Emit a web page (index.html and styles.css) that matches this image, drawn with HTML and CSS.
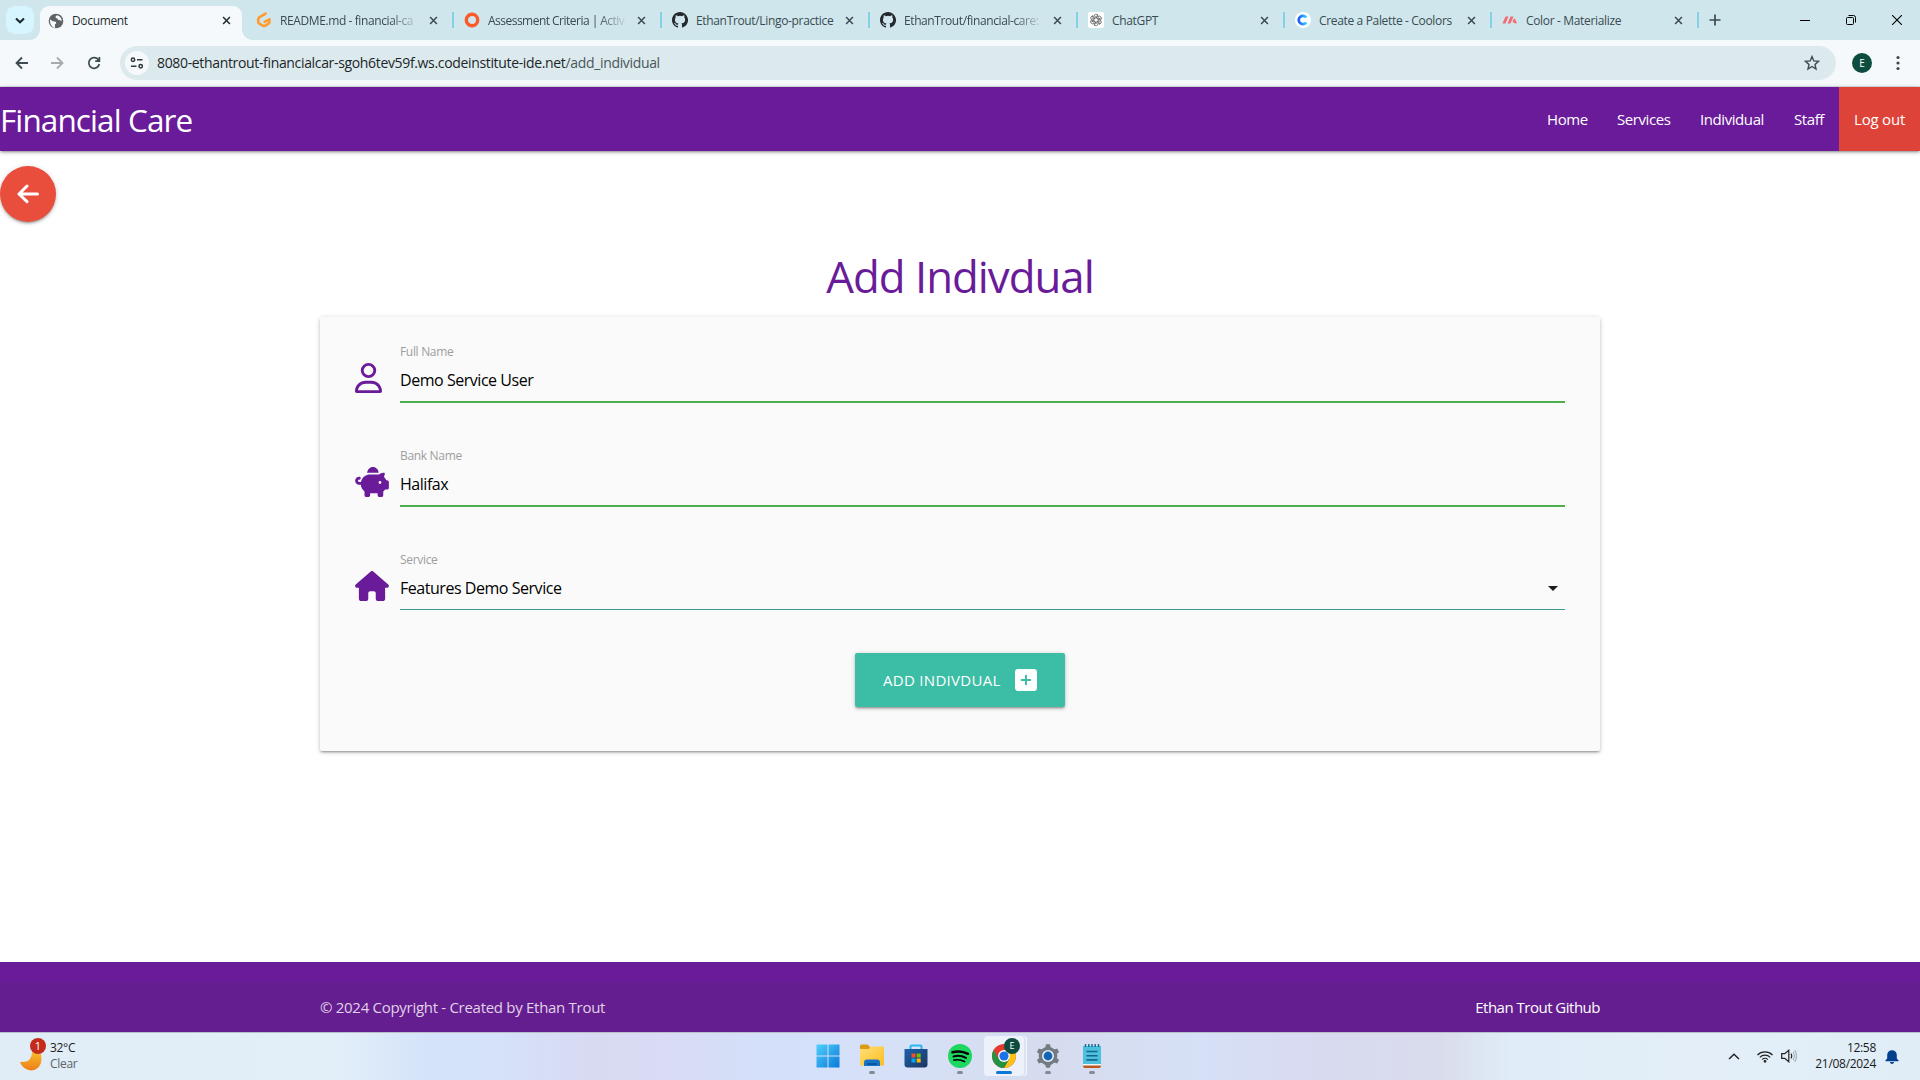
FILE: index.html
```html
<!DOCTYPE html>
<html lang="en">
<head>
<meta charset="utf-8">
<title>Document</title>
<link rel="stylesheet" href="styles.css">
</head>
<body>
<svg width="0" height="0" class="defs" aria-hidden="true">
  <defs>
    <symbol id="x" viewBox="0 0 10 10"><path d="M1.2 1.2l7.6 7.6M8.800 1.200l-7.600 7.600" stroke="currentColor" stroke-width="1.7" fill="none"/></symbol>
    <symbol id="github" viewBox="0 0 16 16"><path fill="#24292f" d="M8 0C3.580 0 0 3.580 0 8c0 3.540 2.290 6.530 5.470 7.590.4.070.55-.17.55-.38 0-.19-.01-.82-.01-1.490-2.010.37-2.530-.49-2.690-.94-.09-.23-.48-.94-.82-1.130-.28-.15-.68-.52-.01-.53.63-.01 1.080.58 1.230.82.72 1.210 1.870.87 2.330.66.07-.52.28-.87.51-1.070-1.780-.2-3.640-.89-3.640-3.950 0-.87.31-1.590.82-2.150-.08-.2-.36-1.020.08-2.120 0 0 .67-.21 2.200.82a7.600 7.600 0 0 1 4 0c1.530-1.040 2.200-.82 2.200-.82.44 1.100.16 1.920.08 2.120.51.56.82 1.270.82 2.150 0 3.070-1.870 3.750-3.650 3.950.29.25.54.73.54 1.480 0 1.070-.01 1.930-.01 2.200 0 .21.15.46.55.38A8 8 0 0 0 8 0z"/></symbol>
  </defs>
</svg>

<header class="tabs">
  <button class="tab-search"><svg width="10" height="7" viewBox="0 0 10 7"><path d="M1 1.500l4 3.800 4-3.800" fill="none" stroke="#18282c" stroke-width="2"/></svg></button>
  <div class="tab active">
    <svg class="fav" viewBox="0 0 16 16"><circle cx="8" cy="8" r="7.300" fill="#5f6368"/><path d="M2 6.200q2.500 2.600 4.800 2.300 1.700.1 1.400 1.900-1.700.4-1.300 2.700l.2 1.800Q2.500 14 2 8.500zM9.200 2.200q-1.700.6-1.700 2 .3 1.300 1.800 1 .1 1.700 1.600 1.900 1.400-.1 2.700 1.300Q14.200 4 9.200 2.200z" fill="#f5f9fc"/></svg>
    <span class="title">Document</span><svg class="close"><use href="#x"/></svg>
  </div>
  <div class="tab wide">
    <svg class="fav" viewBox="0 0 16 16"><path d="M9.500 1.700L3.600 5.100Q2.200 6 2.200 7.500v2.200q0 1.300 1.200 2l3.400 2q1.200.7 2.400 0l3-1.800q1.200-.7 1.200-2V7.300L8.700 9.800" fill="none" stroke="#ff9a2e" stroke-width="2.600" stroke-linecap="round" stroke-linejoin="round"/></svg>
    <span class="title fade">README.md - financial-ca</span><svg class="close"><use href="#x"/></svg>
  </div>
  <div class="tab wide sep">
    <svg class="fav" viewBox="0 0 16 16"><circle cx="8" cy="8" r="5.700" fill="none" stroke="#fa5a28" stroke-width="3.400"/></svg>
    <span class="title fade tight">Assessment Criteria | Activ</span><svg class="close"><use href="#x"/></svg>
  </div>
  <div class="tab wide sep"><svg class="fav"><use href="#github"/></svg><span class="title">EthanTrout/Lingo-practice</span><svg class="close"><use href="#x"/></svg></div>
  <div class="tab wide sep"><svg class="fav"><use href="#github"/></svg><span class="title fade">EthanTrout/financial-care:</span><svg class="close"><use href="#x"/></svg></div>
  <div class="tab sep">
    <svg class="fav" viewBox="0 0 16 16"><rect width="16" height="16" rx="2" fill="#fff"/><g fill="none" stroke="#333" stroke-width=".65"><g id="petal"><path d="M6 9V4.400a2.200 2.200 0 0 1 4.100-1.100L6.700 5.300"/></g><use href="#petal" transform="rotate(60 8 8)"/><use href="#petal" transform="rotate(120 8 8)"/><use href="#petal" transform="rotate(180 8 8)"/><use href="#petal" transform="rotate(240 8 8)"/><use href="#petal" transform="rotate(300 8 8)"/></g></svg>
    <span class="title">ChatGPT</span><svg class="close"><use href="#x"/></svg>
  </div>
  <div class="tab sep">
    <svg class="fav" viewBox="0 0 16 16"><defs><linearGradient id="cool"><stop offset="0" stop-color="#1d5cff"/><stop offset="1" stop-color="#2fd0ff"/></linearGradient></defs><circle cx="8" cy="8" r="8" fill="#fff"/><path d="M11.300 5.500a4.200 4.200 0 1 0 0 5" fill="none" stroke="url(#cool)" stroke-width="2.700"/></svg>
    <span class="title">Create a Palette - Coolors</span><svg class="close"><use href="#x"/></svg>
  </div>
  <div class="tab sep">
    <svg class="fav" viewBox="0 0 16 16"><path d="M.5 11.500L3.500 4.500h3L3.500 11.500zM5.500 11.500L8.500 4.500h3l-3 7zM10.500 9.500l1.500-3q1.500 0 1.500 1.500 0 1.500 1.500 2.200l-.8 1.400q-2.400.1-3.700-2.100z" fill="#ee6e73"/></svg>
    <span class="title">Color - Materialize</span><svg class="close"><use href="#x"/></svg>
  </div>
  <div class="new-tab sep"><svg width="12" height="12" viewBox="0 0 12 12"><path d="M6 .5v11M.5 6h11" stroke="#3c4a4e" stroke-width="1.700"/></svg></div>
  <div class="window-controls">
    <svg width="10" height="10"><path d="M0 5.500h10" stroke="#000"/></svg>
    <svg width="10" height="10" viewBox="0 0 10 10" fill="none" stroke="#000"><rect x=".5" y="2.500" width="7" height="7" rx="1"/><path d="M2.500.5h5a2 2 0 0 1 2 2v5"/></svg>
    <svg width="10" height="10" viewBox="0 0 10 10"><path d="M0 0l10 10M10 0L0 10" stroke="#000" stroke-width="1.100"/></svg>
  </div>
</header>

<div class="toolbar">
  <svg class="back" width="14" height="14" viewBox="0 0 14 14"><path d="M13 7H1.800M7 1.500L1.500 7 7 12.500" fill="none" stroke="#3b4b50" stroke-width="1.800"/></svg>
  <svg class="forward" width="14" height="14" viewBox="0 0 14 14"><path d="M1 7h11.200M7 1.500L12.500 7 7 12.500" fill="none" stroke="#a5abae" stroke-width="1.800"/></svg>
  <svg class="reload" width="14" height="14" viewBox="0 0 14 14"><path d="M11.600 4.200A5.300 5.300 0 1 0 12.300 8M12.400 1v4.200H8.200" fill="none" stroke="#3b4b50" stroke-width="1.700"/></svg>
  <div class="omnibox">
    <span class="tune"><svg width="14" height="12" viewBox="0 0 14 12" fill="none" stroke="#2e3a3e" stroke-width="1.500"><circle cx="3" cy="2.700" r="1.700"/><path d="M7 2.700h5.500M1 9.200h5.500"/><circle cx="10.700" cy="9.200" r="1.700"/></svg></span>
    <span class="url">8080-ethantrout-financialcar-sgoh6tev59f.ws.codeinstitute-ide.net<span class="path">/add_individual</span></span>
    <svg class="star" width="16" height="16" viewBox="0 0 16 16"><path d="M8 1.600l1.800 4.300 4.700.4-3.500 3.100 1 4.600L8 11.500 4 14l1-4.600L1.500 6.300l4.700-.4z" fill="none" stroke="#3d4b50" stroke-width="1.400"/></svg>
  </div>
  <span class="avatar">E</span>
  <svg class="menu" width="4" height="16" viewBox="0 0 4 16" fill="#3b4b50"><circle cx="2" cy="2.500" r="1.600"/><circle cx="2" cy="8" r="1.600"/><circle cx="2" cy="13.500" r="1.600"/></svg>
</div>

<main class="page">
  <nav class="navbar">
    <a class="brand">Financial Care</a>
    <a class="link home">Home</a><a class="link services">Services</a><a class="link individual">Individual</a><a class="link staff">Staff</a><a class="link logout">Log out</a>
  </nav>
  <a class="back-btn"><svg width="22" height="20" viewBox="0 0 22 20"><path d="M20.500 10H2M10 2L2 10l8 7.700" fill="none" stroke="#fff" stroke-width="3" stroke-linecap="round" stroke-linejoin="round"/></svg></a>
  <h3 class="heading"><span>Add Indivdual</span></h3>
  <form class="card">
    <div class="field valid">
      <svg width="27" height="30" viewBox="0 0 448 512" preserveAspectRatio="none" fill="#6a1b9a"><path d="M304 128a80 80 0 1 0-160 0 80 80 0 1 0 160 0zM96 128a128 128 0 1 1 256 0 128 128 0 1 1-256 0zM49.300 464H398.700C389.800 400.900 335.600 352 269.700 352H178.300c-65.900 0-120.100 48.900-129 112zM0 482.300C0 383.800 79.800 304 178.300 304h91.400C368.200 304 448 383.800 448 482.300c0 16.400-13.300 29.700-29.700 29.700H29.700C13.300 512 0 498.700 0 482.300z"/></svg>
      <div class="control"><label>Full Name</label><span class="value">Demo Service User</span></div>
    </div>
    <div class="field valid">
      <svg width="34" height="30" viewBox="0 0 576 512" fill="#6a1b9a"><path d="M400 96l0 .7c-5.300-.4-10.600-.7-16-.7H256c-16.500 0-32.500 2.100-47.800 6-.1-2-.2-4-.2-6 0-53 43-96 96-96s96 43 96 96zm-16 32c3.500 0 7 .1 10.400.3 4.200.3 8.400.7 12.600 1.300C424.600 109.100 450.800 96 480 96h11.500c10.400 0 18 9.800 15.500 19.900l-13.800 55.200c15.800 14.800 28.700 32.800 37.500 52.900H544c17.700 0 32 14.300 32 32v96c0 17.700-14.300 32-32 32H512c-9.100 12.100-19.900 22.900-32 32v64c0 17.700-14.300 32-32 32H416c-17.700 0-32-14.300-32-32V448H256v32c0 17.700-14.300 32-32 32H192c-17.700 0-32-14.300-32-32V416c-34.900-26.200-58.700-66.300-63.200-112H68c-37.600 0-68-30.400-68-68s30.400-68 68-68h4c13.300 0 24 10.700 24 24s-10.700 24-24 24H68c-11 0-20 9-20 20s9 20 20 20H99.200c12.100-59.800 57.700-107.500 116.300-122.800 12.900-3.400 26.500-5.200 40.500-5.200H384zm64 136a24 24 0 1 0-48 0 24 24 0 1 0 48 0z"/></svg>
      <div class="control"><label>Bank Name</label><span class="value">Halifax</span></div>
    </div>
    <div class="field select">
      <svg width="34" height="30" viewBox="0 0 576 512" fill="#6a1b9a"><path d="M575.800 255.500c0 18-15 32.100-32 32.100h-32l.7 160.200V472c0 22.100-17.900 40-40 40H392c-22.100 0-40-17.900-40-40V376c0-17.700-14.300-32-32-32H256c-17.700 0-32 14.300-32 32v96c0 22.100-17.900 40-40 40H104c-22.100 0-40-17.900-40-40V287.600H32c-18 0-32-14-32-32.100 0-9 3-17 10-24L266.400 8c7-7 15-8 22-8s15 2 21 7L564.800 231.500c8 7 12 15 11 24z"/></svg>
      <div class="control"><label>Service</label><span class="value">Features Demo Service</span><svg class="caret" width="10" height="5" viewBox="0 0 10 5"><path d="M0 0h10L5 5z" fill="#1c1c1c"/></svg></div>
    </div>
    <button type="button" class="submit"><span>ADD INDIVDUAL</span><svg width="22" height="22" viewBox="0 0 22 22"><rect width="22" height="22" rx="3.200" fill="#fff"/><path d="M11 6.700v8.600M6.700 11h8.600" stroke="#3cbda5" stroke-width="2" stroke-linecap="round"/></svg></button>
  </form>
  <footer class="footer"><div class="copyright"><span class="copy-text">© 2024 Copyright - Created by Ethan Trout</span><a class="credit">Ethan Trout Github</a></div></footer>
</main>

<div class="taskbar">
  <div class="weather">
    <div class="moon"><svg width="26" height="34" viewBox="0 0 26 34"><defs><linearGradient id="moon" x2="0" y2="1"><stop offset="0" stop-color="#f7bd2d"/><stop offset="1" stop-color="#ef7d16"/></linearGradient></defs><path d="M0 25q12 1 12-10l9 2q2 10-4 14.500Q12 35 6 32 1.500 29.500 0 25z" fill="url(#moon)"/><circle cx="18" cy="9" r="8" fill="#c42b1c"/></svg><b>1</b></div>
    <div class="weather-text"><span>32°C</span><span class="muted">Clear</span></div>
  </div>
  <div class="apps">
    <div class="app"><svg viewBox="0 0 24 24"><defs><linearGradient id="win" x2="1" y2="1"><stop offset="0" stop-color="#4fd0fc"/><stop offset="1" stop-color="#0a78d8"/></linearGradient></defs><path d="M.5.500h11v11H.5zM12.500.500h11v11h-11zM.5 12.500h11v11H.5zM12.500 12.500h11v11h-11z" fill="url(#win)"/></svg></div>
    <div class="app run"><svg viewBox="0 0 24 24"><defs><linearGradient id="fold" x2="1" y2="1"><stop offset="0" stop-color="#ffdf77"/><stop offset="1" stop-color="#fcbd23"/></linearGradient></defs><path d="M0 2q0-1.500 1.500-1.500h6L10 3v4H0z" fill="#dd9a11"/><path d="M0 5h8.500L11 2.500h13v19H0z" fill="url(#fold)"/><path d="M4 22v-3.500Q4 15.500 7 15.500h10q3 0 3 3V22z" fill="#1672c6"/><path d="M7 19h10v2H7z" fill="#0b569c"/></svg></div>
    <div class="app"><svg viewBox="0 0 24 24"><defs><linearGradient id="store" x2="1" y2="1"><stop offset="0" stop-color="#1b62ad"/><stop offset="1" stop-color="#1d3660"/></linearGradient></defs><path d="M6.500 6V2.500q0-1 1-1h9q1 0 1 1V6" fill="none" stroke="#28b8ef" stroke-width="2"/><path d="M.5 5h23v15.500q0 3-3 3h-17q-3 0-3-3z" fill="url(#store)"/><path d="M7.500 9.500h4v4h-4z" fill="#f25022"/><path d="M12.700 9.500h4v4h-4z" fill="#7fba00"/><path d="M7.500 14.500h4v4h-4z" fill="#00a4ef"/><path d="M12.700 14.500h4v4h-4z" fill="#ffb900"/></svg></div>
    <div class="app run"><svg viewBox="0 0 24 24"><circle cx="12" cy="12" r="12" fill="#1ed760"/><path d="M4.500 8.300q8-2.300 15.500 1.500" stroke="#000" stroke-width="2.500" fill="none" stroke-linecap="round"/><path d="M5.500 12.500q6.500-1.800 12.500 1.400" stroke="#000" stroke-width="2" fill="none" stroke-linecap="round"/><path d="M6 16.200q5.500-1.300 10.500 1.300" stroke="#000" stroke-width="1.700" fill="none" stroke-linecap="round"/></svg></div>
    <div class="app current"><svg viewBox="0 0 24 24"><circle cx="12" cy="12" r="12" fill="#e33b2e"/><path d="M22.390 6A12 12 0 0 1 12 24L17.200 15 12 6z" fill="#fbc116"/><path d="M1.610 6A12 12 0 0 0 12 24l5.200-9H6.800z" fill="#229342"/><circle cx="12" cy="12" r="5.900" fill="#fff"/><circle cx="12" cy="12" r="4.600" fill="#1a73e8"/></svg><span class="profile">E</span></div>
    <div class="app run"><svg viewBox="0 0 24 24"><g fill="#737b82"><circle cx="12" cy="12" r="9.300"/><g id="teeth"><path d="M9.300 4L10 .3h4l.7 3.700zM9.300 20l.7 3.700h4l.7-3.700z"/></g><use href="#teeth" transform="rotate(60 12 12)"/><use href="#teeth" transform="rotate(120 12 12)"/></g><circle cx="12" cy="12" r="6" fill="#e7edf5"/><circle cx="12" cy="12" r="4.400" fill="#1265b5"/></svg></div>
    <div class="app run"><svg viewBox="0 0 24 24"><path d="M3 20h18v2q0 2-2 2H5q-2 0-2-2z" fill="#b85a20"/><path d="M3 19h18v2.500H3z" fill="#f4f4f4"/><path d="M3 2h18v18H3z" fill="#4cc0dc"/><path d="M6.500 7.500h11M6.500 11.700h11M6.500 15.900h11" stroke="#15668b" stroke-width="1.600"/><path d="M5.500 0v3M8.800 0v3M12 0v3M15.200 0v3M18.500 0v3" stroke="#15668b" stroke-width="1.400"/></svg></div>
  </div>
  <div class="tray">
    <svg class="chev" width="12" height="7" viewBox="0 0 12 7"><path d="M1 6l5-4.800L11 6" fill="none" stroke="#222" stroke-width="1.400"/></svg>
    <svg class="wifi" width="16" height="13" viewBox="0 0 16 13" fill="none" stroke="#222" stroke-width="1.200"><path d="M.5 5a10.600 10.600 0 0 1 15 0M2.800 7.400a7.300 7.300 0 0 1 10.400 0M5.200 9.600a4 4 0 0 1 5.600 0"/><circle cx="8" cy="11.300" r=".8" fill="#222"/></svg>
    <svg class="sound" width="16" height="14" viewBox="0 0 16 14" fill="none" stroke="#222" stroke-width="1.200"><path d="M.7 4.700h3L7.800 1.200v11.600L3.700 9.300h-3z"/><path d="M10 4.700q1.500 2.300 0 4.600"/><path d="M12 3q2.700 4 0 8M13.700 1q3.700 6 0 12" stroke="#aab2b9"/></svg>
    <div class="clock"><span>12:58</span><span>21/08/2024</span></div>
    <svg class="bell" width="14" height="15" viewBox="0 0 14 15" fill="#00418f"><path d="M2.200 6a4.800 4.800 0 0 1 9.600 0v3.500l1.800 2v.8H.4v-.8l1.800-2zM4.800 13h4.400Q8.500 15 7 15t-2.200-2z"/></svg>
  </div>
</div>
</body>
</html>
```
FILE: styles.css
```css
* { box-sizing: border-box; }
html, body { margin: 0; height: 100%; }
body { width: 1920px; height: 1080px; overflow: hidden; display: flex; flex-direction: column; background: #fff; font-family: "Open Sans", "Noto Sans", sans-serif; font-size: 15px; color: #000; }
svg { display: block; flex: none; }
.defs { display: none; }
button { border: 0; padding: 0; font: inherit; }
a { text-decoration: none; }

.tabs { height: 40px; flex: none; display: flex; background: #cfe6ec; font-size: 12px; color: #3b4b50; }
.tab-search { width: 28px; height: 28px; margin: 6px 6px 0; border-radius: 9px; background: #d6f5ff; display: flex; align-items: center; justify-content: center; }
.tab { position: relative; width: 207px; height: 40px; padding: 0 14px 0 12px; display: flex; align-items: center; }
.tab.wide { width: 208px; }
.tab.active { width: 202px; margin-right: 2px; height: 34px; margin-top: 6px; padding: 0 11px 5px 8px; background: #f5f9fc; border-radius: 9px 9px 0 0; color: #1f2b2f; }
.tab.active::before, .tab.active::after { content: ""; position: absolute; bottom: 0; width: 10px; height: 10px; }
.tab.active::before { left: -10px; background: radial-gradient(circle at 0 0, transparent 9.500px, #f5f9fc 10px); }
.tab.active::after { right: -10px; background: radial-gradient(circle at 100% 0, transparent 9.500px, #f5f9fc 10px); }
.fav { width: 16px; height: 16px; margin-right: 8px; }
.title { flex: 1; min-width: 0; white-space: nowrap; letter-spacing: -.34px; margin-right: 8px; }
.fade { letter-spacing: -.4px; -webkit-mask-image: linear-gradient(90deg, #000 110px, transparent 140px); mask-image: linear-gradient(90deg, #000 110px, transparent 140px); }
.tight { letter-spacing: -.52px; }
.close { width: 9px; height: 9px; }
.sep::before { content: ""; position: absolute; left: 0; top: 12px; width: 2px; height: 16px; background: #84d0e4; }
.new-tab { position: relative; padding: 14px 0 0 12px; flex: 1; }
.window-controls { display: flex; align-items: center; gap: 36px; padding-right: 18px; }

.toolbar { height: 47px; flex: none; display: flex; align-items: center; padding: 0 20px 1px 15px; background: #f5f9fc; border-bottom: 1px solid #d5dee0; }
.forward { margin-left: 21px; }
.reload { margin-left: 23px; margin-right: 19px; }
.omnibox { width: 1716px; height: 34px; border-radius: 17px; display: flex; align-items: center; background: #dceaee; padding: 0 16px 0 5px; }
.tune { width: 24px; height: 24px; border-radius: 50%; background: #f5f9fc; display: flex; align-items: center; justify-content: center; }
.url { margin-left: 8px; flex: 1; font-size: 14px; letter-spacing: -.34px; color: #1c2629; }
.path { color: #4a575b; }
.avatar { width: 20px; height: 20px; margin-left: 16px; border-radius: 50%; background: #0d4d40; color: #fff; font-size: 10px; line-height: 20px; text-align: center; }
.menu { margin-left: 24px; }

.page { flex: 1; display: flex; flex-direction: column; min-height: 0; }
.navbar { height: 64px; flex: none; display: flex; background: #6a1b9a; color: #fff; line-height: 64px; box-shadow: 0 2px 2px 0 rgba(0,0,0,.14), 0 3px 1px -2px rgba(0,0,0,.12), 0 1px 5px 0 rgba(0,0,0,.2); }
.brand { flex: 1; padding-top: 1px; font-size: 31.500px; letter-spacing: -.9px; }
.link { padding: 0 15px; white-space: nowrap; letter-spacing: -.42px; }
.home { width: 70px; } .services { width: 83px; } .individual { width: 94px; } .staff { width: 60px; }
.logout { width: 81px; background: #dd4339; letter-spacing: -.2px; }
.back-btn { width: 56px; height: 56px; margin-top: 15px; flex: none; border-radius: 50%; background: #e94e3c; display: flex; align-items: center; justify-content: center; box-shadow: 0 2px 2px 0 rgba(0,0,0,.14), 0 3px 1px -2px rgba(0,0,0,.12), 0 1px 5px 0 rgba(0,0,0,.2); }
.heading { margin: 29px 0 16px; height: 50px; line-height: 50px; text-align: center; font-size: 43.800px; font-weight: 400; color: #6a1b9a; letter-spacing: -1px; }
.card { width: 1280px; height: 434px; flex: none; margin: 0 auto; padding: 26px 35px 0; border-radius: 2px; background: #fafafa; box-shadow: 0 2px 2px 0 rgba(0,0,0,.14), 0 3px 1px -2px rgba(0,0,0,.12), 0 1px 5px 0 rgba(0,0,0,.2); }
.field { height: 104px; display: flex; justify-content: space-between; }
.field > svg { margin-top: 20px; }
.control { width: 1165px; height: 59px; display: grid; grid-template: 18px 40px / 1fr auto; border-bottom: 1px solid #3a9b92; }
.valid .control { height: 60px; border-bottom: 2px solid #4caf50; }
.control label { grid-column: 1 / 3; font-size: 12px; line-height: 17px; color: #9e9e9e; letter-spacing: -.32px; }
.value { font-size: 16px; line-height: 38px; letter-spacing: -.46px; }
.caret { margin: 17px 7px 0 0; }
.submit { width: 210px; height: 54px; margin: -2px auto 0; padding: 0 28px; border-radius: 2px; display: flex; align-items: center; justify-content: space-between; background: #3cbda5; color: #fff; white-space: nowrap; letter-spacing: .3px; box-shadow: 0 2px 2px 0 rgba(0,0,0,.14), 0 3px 1px -2px rgba(0,0,0,.12), 0 1px 5px 0 rgba(0,0,0,.2); }
.footer { margin-top: auto; padding-top: 20px; background: #6a1b9a; color: #fff; }
.copyright { height: 50px; padding: 0 320px 0; display: flex; align-items: center; justify-content: space-between; background: #651e8f; letter-spacing: -.29px; }
.copy-text { color: #e0d2e9; }
.credit { letter-spacing: -.5px; }

.taskbar { height: 48px; flex: none; display: grid; grid-template-columns: 1fr 305px 1fr; border-top: 1px solid #b9bfc8; background: linear-gradient(90deg, #e0edf7 0, #e2eef8 340px, #d4e3fa 430px, #d5e2fa 500px, #d8daf2 590px, #d8dcf4 680px, #d4e0fa 770px, #d6e1f8 880px, #d6dcee 1050px, #d6e0f6 1200px, #d8daf0 1320px, #d9dcec 1440px, #e0ecf7 1510px, #e3eef8 1700px, #e0edf7 1920px); font-size: 12px; color: #1b1b1b; }
.weather { display: flex; padding: 4px 0 0 20px; }
.moon { position: relative; width: 30px; }
.moon b { position: absolute; left: 10px; top: 1px; width: 16px; text-align: center; font-weight: 400; font-size: 11px; line-height: 16px; color: #fff; }
.weather-text, .clock { display: flex; flex-direction: column; line-height: 16px; padding-top: 3px; letter-spacing: -.3px; }
.muted { color: #5b6268; }
.apps { display: flex; justify-content: space-between; padding-top: 3px; }
.app { position: relative; width: 40px; height: 40px; padding: 8px; border-radius: 4px; }
.app svg { width: 24px; height: 24px; }
.run::after, .current::after { content: ""; position: absolute; left: 17px; bottom: 2px; width: 6px; height: 3px; border-radius: 2px; background: #858a94; }
.current { background: #edf1fa; box-shadow: 2px 0 0 #dde3f0, 3px 0 0 #f2f5fb; }
.current::after { left: 12px; width: 16px; background: #0b78d4; }
.profile { position: absolute; left: 20px; top: 2px; width: 16px; height: 16px; border-radius: 50%; background: #0d4d40; color: #fff; font-size: 9px; line-height: 16px; text-align: center; }
.tray { display: flex; align-items: flex-start; justify-content: flex-end; padding-right: 21px; }
.chev { margin: 20px 17px 0 0; } .wifi { margin: 17px 8px 0 0; } .sound { margin: 16px 0 0; }
.clock { width: 79px; text-align: right; padding-top: 7px; }
.bell { margin: 16px 0 0 9px; }
```
